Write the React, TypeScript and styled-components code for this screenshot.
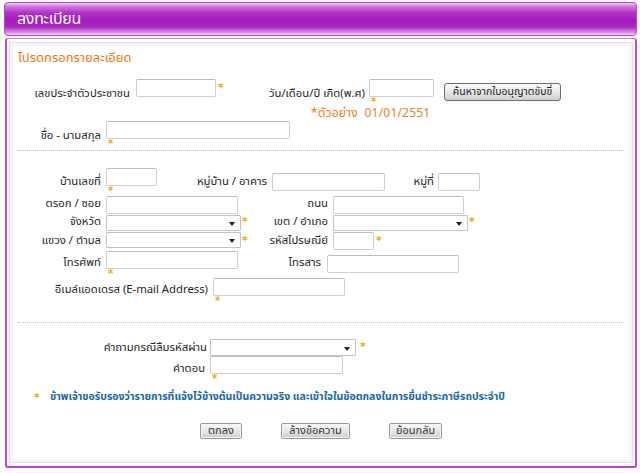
import React from "react";
import styled, { createGlobalStyle } from "styled-components";

const GlobalStyle = createGlobalStyle`
  html, body {
    margin: 0;
    padding: 0;
    background: #ffffff;
  }
  body {
    font-family: Tahoma, "Noto Sans Thai", "Noto Sans", "Liberation Sans", sans-serif;
    font-size: 12px;
    color: #333333;
  }
`;

const Page = styled.div`
  width: 640px;
  height: 473px;
  box-sizing: border-box;
  padding: 2px 3px 0 4px;
`;

const Header = styled.div`
  height: 34px;
  box-sizing: border-box;
  border: 1px solid #b648c8;
  border-radius: 4px;
  padding-left: 12px;
  display: flex;
  align-items: center;
  background: linear-gradient(
    #f3cdf6 0%,
    #d27ee0 10%,
    #b232c8 30%,
    #a31ab8 55%,
    #ad2ac2 75%,
    #d593e2 92%,
    #f1d2f3 100%
  );
  color: #ffffff;
  font-size: 16px;
  letter-spacing: -0.3px;
`;

const Panel = styled.div`
  margin: 2px 0 0 1px;
  height: 430px;
  box-sizing: border-box;
  border: 2px solid #c242d6;
  border-top: 1px solid #cf86dc;
  border-radius: 3px;
  padding: 3px 2px 3px 2px;
`;

const Sheet = styled.div`
  height: 100%;
  box-sizing: border-box;
  border: 1px solid #e2e2e2;
  box-shadow: inset 0 0 4px 1px #ececec;
  display: flex;
  flex-direction: column;
`;

const Title = styled.div`
  margin: 7px 0 0 8px;
  height: 16px;
  line-height: 16px;
  color: #f07a10;
  font-size: 13px;
`;

const Row = styled.div<{ $top?: number; $h: number }>`
  display: flex;
  align-items: flex-start;
  margin-top: ${(p) => p.$top ?? 0}px;
  height: ${(p) => p.$h}px;
`;

const Label = styled.div<{ $w: number; $dy?: number; $pad?: number }>`
  width: ${(p) => p.$w}px;
  flex: none;
  box-sizing: border-box;
  padding-right: ${(p) => p.$pad ?? 5}px;
  margin-top: ${(p) => p.$dy ?? 0}px;
  text-align: right;
  line-height: 14px;
  white-space: nowrap;
  color: #262626;
  font-size: 11.3px;
`;

const Input = styled.div<{ $w: number; $dy?: number; $h?: number }>`
  width: ${(p) => p.$w}px;
  height: ${(p) => p.$h ?? 18}px;
  flex: none;
  box-sizing: border-box;
  margin-top: ${(p) => p.$dy ?? 0}px;
  border: 1px solid #cfcfcf;
  border-top-color: #bdbdbd;
  border-radius: 2px;
  background: #ffffff;
`;

const Select = styled.div<{ $w: number; $h?: number }>`
  width: ${(p) => p.$w}px;
  height: ${(p) => p.$h ?? 16}px;
  flex: none;
  box-sizing: border-box;
  border: 1px solid #c4c4c4;
  border-radius: 1px;
  background: #ffffff;
  position: relative;

  &::after {
    content: "";
    position: absolute;
    right: 5px;
    top: 50%;
    margin-top: -1px;
    border-left: 3px solid transparent;
    border-right: 3px solid transparent;
    border-top: 4px solid #222222;
  }
`;

const Field = styled.div`
  display: flex;
  flex-direction: column;
  align-items: flex-start;
  flex: none;
`;

const Star = styled.span<{ $dy?: number; $gap?: number }>`
  flex: none;
  width: 9px;
  margin-left: ${(p) => p.$gap ?? 2}px;
  margin-top: ${(p) => p.$dy ?? 0}px;
  color: #f5a300;
  font-size: 11px;
  line-height: 10px;
  font-weight: bold;
  font-family: "DejaVu Sans", sans-serif;
`;

const StarBelow = styled(Star)`
  margin-left: 2px;
  margin-top: 1px;
  line-height: 8px;
  height: 8px;
  font-size: 10px;
`;

const SearchButton = styled.button`
  margin: 4px 0 0 10px;
  width: 117px;
  height: 18px;
  flex: none;
  padding: 0;
  border: 1px solid #6e6e6e;
  border-radius: 3px;
  background: linear-gradient(#fbfbfb, #e6e6e6 55%, #cfcfcf);
  font-family: inherit;
  font-size: 10.5px;
  color: #222222;
`;

const Example = styled.div`
  margin: 3px 0 0 301px;
  height: 13px;
  line-height: 13px;
  color: #ef7d22;
  font-size: 12px;
  letter-spacing: 0.2px;
`;

const Separator = styled.div<{ $top: number }>`
  margin: ${(p) => p.$top}px 8px 0 8px;
  border-top: 1px dotted #c6c6c6;
`;

const Declaration = styled.div`
  display: flex;
  align-items: center;
  margin: 8px 0 0 24px;
  height: 14px;
  color: #1668a8;
  font-size: 10.5px;
  font-weight: bold;
  white-space: nowrap;
`;

const DeclStar = styled.span`
  color: #f5a300;
  width: 16px;
  font-family: "DejaVu Sans", sans-serif;
`;

const Buttons = styled.div`
  display: flex;
  gap: 39px;
  margin: 19px 0 0 190px;
`;

const FormButton = styled.button<{ $w: number }>`
  width: ${(p) => p.$w}px;
  height: 16px;
  padding: 0;
  border: 1px solid #9a9a9a;
  border-radius: 2px;
  background: linear-gradient(#fafafa, #e2e2e2 60%, #cbcbcb);
  box-shadow: inset 0 0 0 1px #f4f4f4;
  font-family: inherit;
  font-size: 11px;
  line-height: 14px;
  color: #333333;
`;

export default function App() {
  return (
    <>
      <GlobalStyle />
      <Page>
        <Header>ลงทะเบียน</Header>
        <Panel>
          <Sheet>
            <Title>โปรดกรอกรายละเอียด</Title>

            <Row $top={13} $h={25}>
              <Label $w={126} $pad={6} $dy={8}>
                เลขประจำตัวประชาชน
              </Label>
              <Input $w={80} />
              <Star $dy={4}>*</Star>
              <Label $w={142} $pad={4} $dy={8}>
                วัน/เดือน/ปี เกิด(พ.ศ)
              </Label>
              <Field>
                <Input $w={65} />
                <StarBelow>*</StarBelow>
              </Field>
              <SearchButton>ค้นหาจากใบอนุญาตขับขี่</SearchButton>
            </Row>
            <Example>*ตัวอย่าง&nbsp;&nbsp;01/01/2551</Example>

            <Row $top={1} $h={24}>
              <Label $w={96} $dy={8}>
                ชื่อ - นามสกุล
              </Label>
              <Field>
                <Input $w={184} />
                <StarBelow>*</StarBelow>
              </Field>
            </Row>

            <Separator $top={5} />

            <Row $top={17} $h={28}>
              <Label $w={96} $dy={7}>
                บ้านเลขที่
              </Label>
              <Field>
                <Input $w={51} />
                <StarBelow>*</StarBelow>
              </Field>
              <Label $w={115} $dy={7}>
                หมู่บ้าน / อาคาร
              </Label>
              <Input $w={113} $dy={5} />
              <Label $w={53} $pad={4} $dy={7}>
                หมู่ที่
              </Label>
              <Input $w={42} $dy={5} />
            </Row>

            <Row $h={19}>
              <Label $w={96} $dy={1}>
                ตรอก / ซอย
              </Label>
              <Input $w={132} />
              <Label $w={95} $dy={1}>
                ถนน
              </Label>
              <Input $w={131} />
            </Row>

            <Row $h={17}>
              <Label $w={96}>จังหวัด</Label>
              <Select $w={135} />
              <Star $gap={1} $dy={2}>
                *
              </Star>
              <Label $w={82}>เขต / อำเภอ</Label>
              <Select $w={135} />
              <Star $gap={1} $dy={2}>
                *
              </Star>
            </Row>

            <Row $h={19}>
              <Label $w={96} $dy={2}>
                แขวง / ตำบล
              </Label>
              <Select $w={135} />
              <Star $gap={1} $dy={4}>
                *
              </Star>
              <Label $w={82} $dy={2}>
                รหัสไปรษณีย์
              </Label>
              <Input $w={41} />
              <Star $gap={2} $dy={4}>
                *
              </Star>
            </Row>

            <Row $h={27}>
              <Label $w={96} $dy={5}>
                โทรศัพท์
              </Label>
              <Field>
                <Input $w={132} />
                <StarBelow>*</StarBelow>
              </Field>
              <Label $w={89} $pad={6} $dy={5}>
                โทรสาร
              </Label>
              <Input $w={132} $dy={4} />
            </Row>

            <Row $h={24}>
              <Label $w={203} $dy={5}>
                อีเมล์แอดเดรส (E-mail Address)
              </Label>
              <Field>
                <Input $w={132} />
                <StarBelow>*</StarBelow>
              </Field>
            </Row>

            <Separator $top={20} />

            <Row $top={16} $h={17}>
              <Label $w={200} $pad={3} $dy={2}>
                คำถามกรณีลืมรหัสผ่าน
              </Label>
              <Select $w={146} $h={17} />
              <Star $gap={4} $dy={3}>
                *
              </Star>
            </Row>

            <Row $h={26}>
              <Label $w={200} $dy={6}>
                คำตอบ
              </Label>
              <Field>
                <Input $w={133} />
                <StarBelow>*</StarBelow>
              </Field>
            </Row>

            <Declaration>
              <DeclStar>*</DeclStar>
              ข้าพเจ้าขอรับรองว่ารายการที่แจ้งไว้ข้างต้นเป็นความจริง
              และเข้าใจในข้อตกลงในการยื่นชำระภาษีรถประจำปี
            </Declaration>

            <Buttons>
              <FormButton $w={42}>ตกลง</FormButton>
              <FormButton $w={69}>ล้างข้อความ</FormButton>
              <FormButton $w={53}>ย้อนกลับ</FormButton>
            </Buttons>
          </Sheet>
        </Panel>
      </Page>
    </>
  );
}
